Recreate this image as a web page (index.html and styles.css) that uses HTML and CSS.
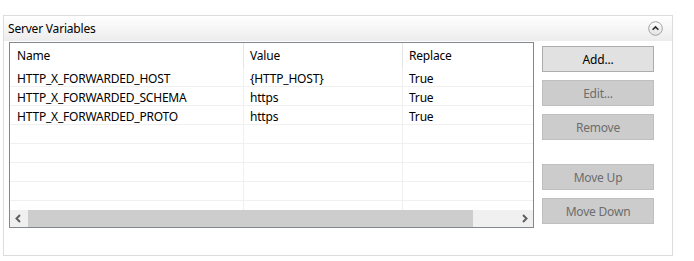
FILE: index.html
```html
<!DOCTYPE html>
<html lang="en">
<head>
  <meta charset="UTF-8" />
  <title>Server Variables</title>
  <link rel="stylesheet" href="styles.css">
</head>
<body>
  <div class="group">
    <div class="group-header">
      <span class="group-title">Server Variables</span>
      <span class="collapse">
        <svg width="15" height="15" viewBox="0 0 15 15">
          <defs>
            <linearGradient id="cg" x1="0" y1="0" x2="0" y2="1">
              <stop offset="0" stop-color="#ffffff"/>
              <stop offset="1" stop-color="#e2e2e2"/>
            </linearGradient>
          </defs>
          <circle cx="7.5" cy="7.5" r="6.8" fill="url(#cg)" stroke="#a3a3a3" stroke-width="1"/>
          <path d="M4.6 8.8 L7.5 5.9 L10.4 8.8" fill="none" stroke="#2b2b2b" stroke-width="1.6"/>
        </svg>
      </span>
    </div>

    <div class="group-body">
      <div class="list">
        <div class="list-head">
          <div class="col c1">Name</div>
          <div class="col c2">Value</div>
          <div class="col c3">Replace</div>
        </div>
        <div class="list-rows">
          <div class="row">
            <div class="col c1">HTTP_X_FORWARDED_HOST</div>
            <div class="col c2">{HTTP_HOST}</div>
            <div class="col c3">True</div>
          </div>
          <div class="row">
            <div class="col c1">HTTP_X_FORWARDED_SCHEMA</div>
            <div class="col c2">https</div>
            <div class="col c3">True</div>
          </div>
          <div class="row">
            <div class="col c1">HTTP_X_FORWARDED_PROTO</div>
            <div class="col c2">https</div>
            <div class="col c3">True</div>
          </div>
          <div class="row"><div class="col c1"></div><div class="col c2"></div><div class="col c3"></div></div>
          <div class="row"><div class="col c1"></div><div class="col c2"></div><div class="col c3"></div></div>
          <div class="row"><div class="col c1"></div><div class="col c2"></div><div class="col c3"></div></div>
          <div class="row"><div class="col c1"></div><div class="col c2"></div><div class="col c3"></div></div>
          <div class="row"><div class="col c1"></div><div class="col c2"></div><div class="col c3"></div></div>
        </div>
        <div class="hscroll">
          <span class="arrow">
            <svg width="17" height="17" viewBox="0 0 17 17"><path d="M10 5 L6.5 8.5 L10 12" fill="none" stroke="#606060" stroke-width="2"/></svg>
          </span>
          <div class="track"><div class="thumb"></div></div>
          <span class="arrow">
            <svg width="17" height="17" viewBox="0 0 17 17"><path d="M7 5 L10.5 8.5 L7 12" fill="none" stroke="#606060" stroke-width="2"/></svg>
          </span>
        </div>
      </div>

      <div class="buttons">
        <button class="btn">Add...</button>
        <button class="btn" disabled>Edit...</button>
        <button class="btn" disabled>Remove</button>
        <button class="btn spaced" disabled>Move Up</button>
        <button class="btn" disabled>Move Down</button>
      </div>
    </div>
  </div>
</body>
</html>
```

FILE: styles.css
```css
* {
  margin: 0;
  padding: 0;
  box-sizing: border-box;
  font-family: "Noto Sans", "Open Sans", sans-serif;
}

body {
  background: #fff;
  color: #000;
  font-size: 12px;
  letter-spacing: -0.2px;
}

.group {
  margin: 15px 0 0 3px;
  width: 670px;
  height: 241px;
  border: 1px solid #dcdcdc;
}

.group-header {
  height: 25px;
  display: flex;
  align-items: center;
  justify-content: space-between;
  padding: 0 9px 0 4px;
  background: linear-gradient(#ffffff, #ececec);
}

.group-title {
  font-size: 12px;
  color: #000;
}

.collapse {
  display: flex;
  margin-top: -1px;
}

.group-body {
  display: flex;
  padding: 1px 0 0 5px;
}

/* list view */
.list {
  width: 525px;
  height: 186px;
  border: 1px solid #828790;
  display: flex;
  flex-direction: column;
  background: #fff;
}

.list-head {
  height: 25px;
  display: flex;
  flex-shrink: 0;
}

.list-head .col {
  line-height: 25px;
  border-right: 1px solid #e5e5e5;
}

.list-head .c3 {
  border-right: none;
}

.col {
  padding-left: 6px;
  white-space: nowrap;
  overflow: hidden;
}

.c1 { width: 234px; padding-left: 7px; }
.c2 { width: 159px; }
.c3 { flex: 1; }

.list-rows {
  flex: 1;
  overflow: hidden;
}

.row {
  display: flex;
  height: 19px;
  border-bottom: 1px solid #f0f0f0;
}

.row .col {
  line-height: 18px;
  padding-top: 2px;
  border-right: 1px solid #f0f0f0;
}

.row .c3 {
  border-right: none;
}

.hscroll {
  height: 17px;
  display: flex;
  background: #f0f0f0;
  flex-shrink: 0;
}

.arrow {
  width: 17px;
  display: flex;
}

.track {
  flex: 1;
  padding: 0 43px 0 1px;
}

.thumb {
  height: 100%;
  background: #cdcdcd;
}

/* buttons */
.buttons {
  display: flex;
  flex-direction: column;
  gap: 8px;
  margin: 4px 0 0 8px;
}

.btn {
  width: 112px;
  height: 26px;
  font-size: 12px;
  letter-spacing: -0.2px;
  color: #000;
  background: #e1e1e1;
  border: 1px solid #adadad;
}

.btn:disabled {
  background: #cccccc;
  border-color: #bfbfbf;
  color: #6d6d6d;
}

.btn.spaced {
  margin-top: 16px;
}
```
